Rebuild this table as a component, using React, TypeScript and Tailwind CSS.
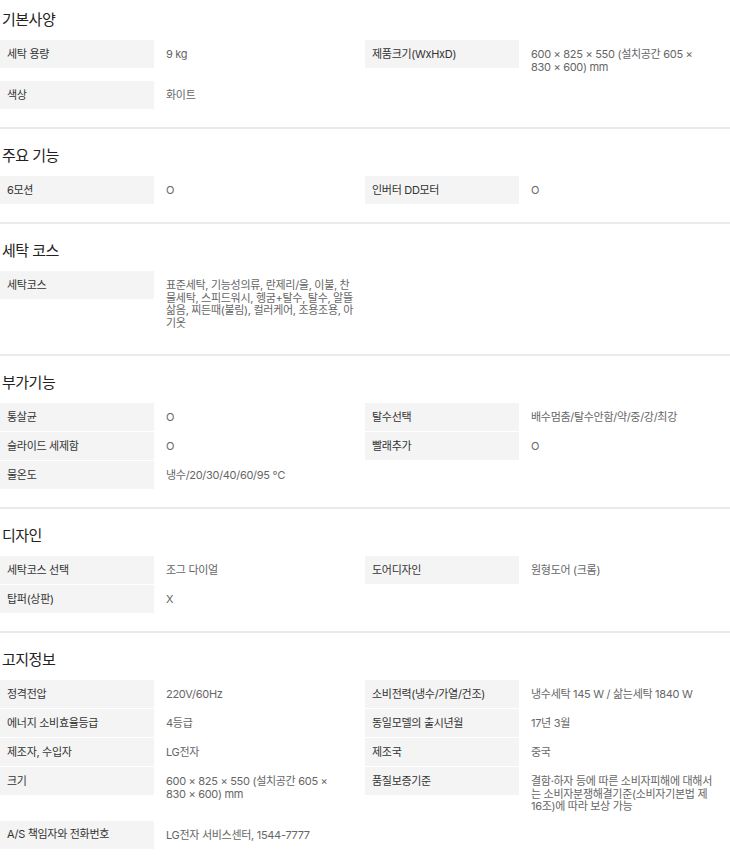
type Pair = [string, string];

const sections: { title: string; rows: Pair[][] }[] = [
  {
    title: "기본사양",
    rows: [
      [
        ["세탁 용량", "9 kg"],
        ["제품크기(WxHxD)", "600 × 825 × 550 (설치공간 605 ×\n830 × 600) mm"],
      ],
      [["색상", "화이트"]],
    ],
  },
  {
    title: "주요 기능",
    rows: [
      [
        ["6모션", "O"],
        ["인버터 DD모터", "O"],
      ],
    ],
  },
  {
    title: "세탁 코스",
    rows: [
      [
        [
          "세탁코스",
          "표준세탁, 기능성의류, 란제리/울, 이불, 찬\n물세탁, 스피드워시, 헹굼+탈수, 탈수, 알뜰\n삶음, 찌든때(불림), 컬러케어, 조용조용, 아\n기옷",
        ],
      ],
    ],
  },
  {
    title: "부가기능",
    rows: [
      [
        ["통살균", "O"],
        ["탈수선택", "배수멈춤/탈수안함/약/중/강/최강"],
      ],
      [
        ["슬라이드 세제함", "O"],
        ["빨래추가", "O"],
      ],
      [["물온도", "냉수/20/30/40/60/95 ℃"]],
    ],
  },
  {
    title: "디자인",
    rows: [
      [
        ["세탁코스 선택", "조그 다이얼"],
        ["도어디자인", "원형도어 (크롬)"],
      ],
      [["탑퍼(상판)", "X"]],
    ],
  },
  {
    title: "고지정보",
    rows: [
      [
        ["정격전압", "220V/60Hz"],
        ["소비전력(냉수/가열/건조)", "냉수세탁 145 W / 삶는세탁 1840 W"],
      ],
      [
        ["에너지 소비효율등급", "4등급"],
        ["동일모델의 출시년월", "17년 3월"],
      ],
      [
        ["제조자, 수입자", "LG전자"],
        ["제조국", "중국"],
      ],
      [
        ["크기", "600 × 825 × 550 (설치공간 605 ×\n830 × 600) mm"],
        [
          "품질보증기준",
          "결함·하자 등에 따른 소비자피해에 대해서\n는 소비자분쟁해결기준(소비자기본법 제\n16조)에 따라 보상 가능",
        ],
      ],
      [["A/S 책임자와 전화번호", "LG전자 서비스센터, 1544-7777"]],
    ],
  },
];

export default function App() {
  return (
    <div className="w-full bg-white font-['Inter','Noto_Sans_CJK_KR',sans-serif]">
      {sections.map((section, i) => (
        <section
          key={section.title}
          className={
            i === 0
              ? "pt-[10px] pb-[18px]"
              : "border-t-2 border-[#ebebeb] pt-[17px] pb-[18px]"
          }
        >
          <h2 className="mb-[10px] pl-[2px] text-[15px] leading-[20px] tracking-[-0.5px] text-[#222]">
            {section.title}
          </h2>
          <div className="flex flex-col gap-px">
            {section.rows.map((row, r) => (
              <div key={r} className="flex">
                {row.map(([label, value]) => (
                  <div key={label} className="flex w-1/2 items-start">
                    <div className="flex h-[28px] w-[154px] shrink-0 items-center bg-[#f4f4f4] pl-[7px] text-[11px] tracking-[-0.3px] text-[#333]">
                      {label}
                    </div>
                    <div className="whitespace-pre pt-[8px] pb-[7px] pl-3 text-[11px] leading-[12.5px] tracking-[-0.3px] text-[#666]">
                      {value}
                    </div>
                  </div>
                ))}
              </div>
            ))}
          </div>
        </section>
      ))}
    </div>
  );
}
